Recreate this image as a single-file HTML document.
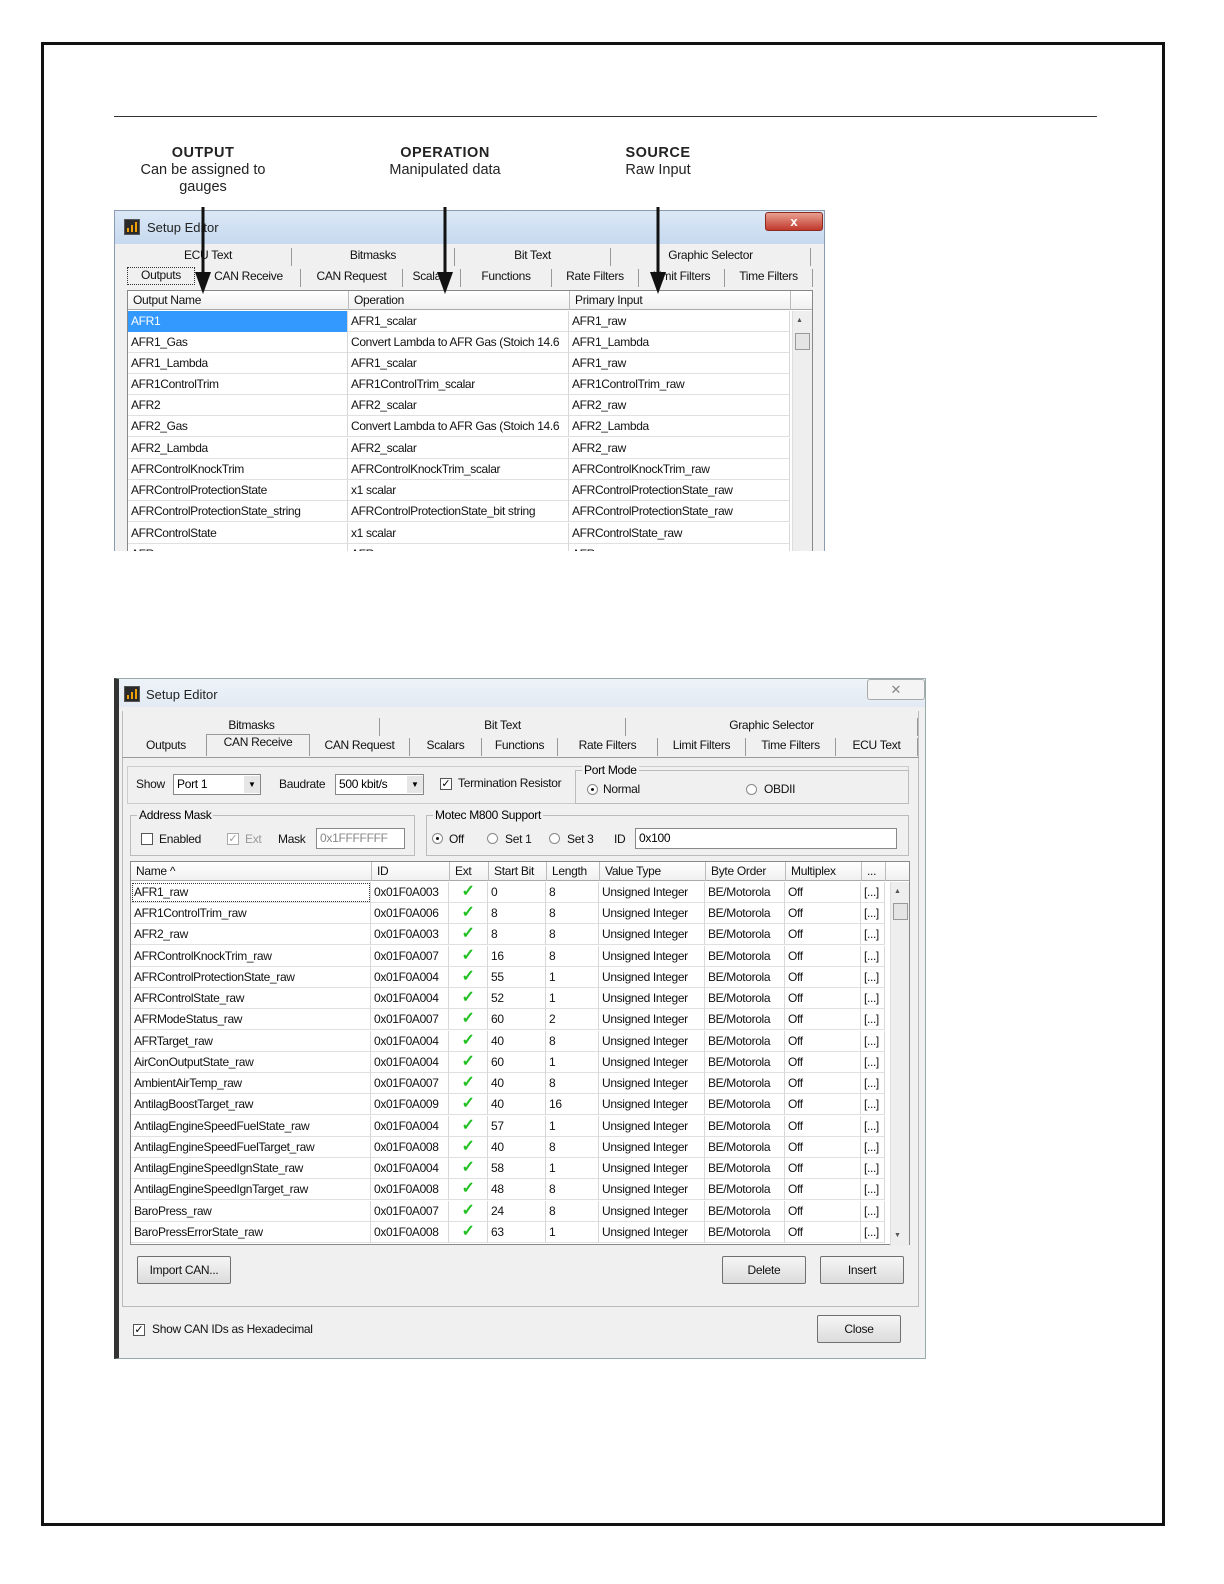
<!DOCTYPE html>
<html><head><meta charset="utf-8"><style>
*{box-sizing:border-box;margin:0;padding:0}
body{width:1224px;height:1584px;background:#fff;position:relative;font-family:"Liberation Sans",sans-serif;overflow:hidden}
.a{position:absolute}
.t{font-size:12px;color:#111;white-space:nowrap;letter-spacing:-0.3px}
.lbl{position:absolute;text-align:center;font-size:14.5px;line-height:17px;color:#222}
.lbl b{letter-spacing:.5px}
.win{position:absolute;background:#f0f0f0;border:1px solid #8a9bb0;overflow:hidden}
.title{position:absolute;left:0;right:0;top:0;background:linear-gradient(#dbe8f6,#c6d9ef);font-size:13px;color:#222}
.ico{position:absolute;width:16px;height:16px;background:#2a2a2a;border:1px solid #555}
.ico i{position:absolute;bottom:2px;width:2px;background:#f0a000}
.tab{position:absolute;font-size:12px;text-align:center;letter-spacing:-0.3px;color:#111;border-right:1px solid #999}
.grid{position:absolute;background:#fff;border:1px solid #888}
.row{position:absolute;left:0;height:21px;border-bottom:1px solid #e0e0e0;display:flex}
.row span{display:block;height:21px;line-height:20px;font-size:12px;padding-left:3px;letter-spacing:-0.35px;border-right:1px solid #d8d8d8;white-space:nowrap;overflow:hidden;color:#111}
.hdr{position:absolute;left:0;height:19px;display:flex;background:linear-gradient(#fff,#f0f0f0);border-bottom:1px solid #aaa}
.hdr span{display:block;height:19px;line-height:18px;font-size:12px;padding-left:5px;letter-spacing:-0.3px;border-right:1px solid #bbb;white-space:nowrap;color:#111}
.btn{position:absolute;border:1px solid #707070;border-radius:2px;background:linear-gradient(#f6f6f6,#dcdcdc);font-size:12px;text-align:center;letter-spacing:-0.3px;color:#111}
.chk{position:absolute;width:12px;height:12px;border:1px solid #555;background:#fff;font-size:11px;line-height:10px;text-align:center}
.rad{position:absolute;width:11px;height:11px;border:1px solid #888;border-radius:50%;background:#fff}
.grp{position:absolute;border:1px solid #bbb}
.grp em{position:absolute;top:-8px;left:6px;background:#f0f0f0;font-style:normal;font-size:12px;letter-spacing:-0.3px;padding:0 2px}
.in{position:absolute;background:#fff;border:1px solid #888;font-size:12px;padding-left:3px;letter-spacing:-0.3px;line-height:18px}
.row span.ck{color:#22c022;font-weight:bold;font-size:16px;padding-left:0}
</style></head><body>
<div class="a" style="left:41px;top:42px;width:1124px;height:1484px;border:3px solid #111"></div>
<div class="a" style="left:114px;top:116px;width:983px;height:1px;background:#333"></div>

<div class="lbl" style="left:123px;top:145px;width:160px"><b>OUTPUT</b><br>Can be assigned to<br>gauges</div>
<div class="lbl" style="left:365px;top:145px;width:160px"><b>OPERATION</b><br>Manipulated data</div>
<div class="lbl" style="left:578px;top:145px;width:160px"><b>SOURCE</b><br>Raw Input</div>

<!-- TOP WINDOW -->
<div class="win" style="left:114px;top:210px;width:711px;height:341px;border-bottom:none">
 <div class="title" style="height:33px"><div class="ico" style="left:9px;top:8px"><i style="left:2px;height:4px"></i><i style="left:6px;height:7px"></i><i style="left:10px;height:10px"></i></div><div class="a" style="left:32px;top:9px">Setup Editor</div>
 <div class="a" style="left:650px;top:1px;width:58px;height:19px;background:linear-gradient(#e8a090,#c0392b);border:1px solid #8a2a20;border-radius:3px;color:#fff;text-align:center;font-weight:bold;font-size:13px;line-height:17px">x</div></div>
 <div class="tab" style="left:10px;top:37px;width:167px;height:18px">ECU Text</div>
 <div class="tab" style="left:177px;top:37px;width:163px;height:18px">Bitmasks</div>
 <div class="tab" style="left:340px;top:37px;width:156px;height:18px">Bit Text</div>
 <div class="tab" style="left:496px;top:37px;width:200px;height:18px">Graphic Selector</div>
 <div class="tab" style="left:12px;top:56px;width:68px;height:18px;border:1px dotted #333">Outputs</div>
 <div class="tab" style="left:82px;top:58px;width:104px;height:18px">CAN Receive</div>
 <div class="tab" style="left:186px;top:58px;width:102px;height:18px">CAN Request</div>
 <div class="tab" style="left:288px;top:58px;width:58px;height:18px">Scalars</div>
 <div class="tab" style="left:346px;top:58px;width:91px;height:18px">Functions</div>
 <div class="tab" style="left:437px;top:58px;width:87px;height:18px">Rate Filters</div>
 <div class="tab" style="left:524px;top:58px;width:86px;height:18px">Limit Filters</div>
 <div class="tab" style="left:610px;top:58px;width:88px;height:18px">Time Filters</div>
 <div class="grid" style="left:12px;top:79px;width:686px;height:270px">
  <div class="hdr" style="top:0;width:684px"><span style="width:221px">Output Name</span><span style="width:221px">Operation</span><span style="width:221px">Primary Input</span></div>
  <div class="a" style="right:0;top:20px;width:20px;height:260px;background:#eee;border-left:1px solid #ddd"><div class="a" style="left:3px;top:6px;font-size:7px;color:#555">▲</div><div class="a" style="left:2px;top:22px;width:15px;height:17px;border:1px solid #999;background:#e4e4e4"></div></div>
  <div class="row" style="top:20px"><span style="width:220px;background:#3399ff;color:#fff">AFR1</span><span style="width:221px">AFR1_scalar</span><span style="width:221px">AFR1_raw</span></div>
  <div class="row" style="top:41px"><span style="width:220px">AFR1_Gas</span><span style="width:221px">Convert Lambda to AFR Gas (Stoich 14.6</span><span style="width:221px">AFR1_Lambda</span></div>
  <div class="row" style="top:62px"><span style="width:220px">AFR1_Lambda</span><span style="width:221px">AFR1_scalar</span><span style="width:221px">AFR1_raw</span></div>
  <div class="row" style="top:83px"><span style="width:220px">AFR1ControlTrim</span><span style="width:221px">AFR1ControlTrim_scalar</span><span style="width:221px">AFR1ControlTrim_raw</span></div>
  <div class="row" style="top:104px"><span style="width:220px">AFR2</span><span style="width:221px">AFR2_scalar</span><span style="width:221px">AFR2_raw</span></div>
  <div class="row" style="top:125px"><span style="width:220px">AFR2_Gas</span><span style="width:221px">Convert Lambda to AFR Gas (Stoich 14.6</span><span style="width:221px">AFR2_Lambda</span></div>
  <div class="row" style="top:147px"><span style="width:220px">AFR2_Lambda</span><span style="width:221px">AFR2_scalar</span><span style="width:221px">AFR2_raw</span></div>
  <div class="row" style="top:168px"><span style="width:220px">AFRControlKnockTrim</span><span style="width:221px">AFRControlKnockTrim_scalar</span><span style="width:221px">AFRControlKnockTrim_raw</span></div>
  <div class="row" style="top:189px"><span style="width:220px">AFRControlProtectionState</span><span style="width:221px">x1 scalar</span><span style="width:221px">AFRControlProtectionState_raw</span></div>
  <div class="row" style="top:210px"><span style="width:220px">AFRControlProtectionState_string</span><span style="width:221px">AFRControlProtectionState_bit string</span><span style="width:221px">AFRControlProtectionState_raw</span></div>
  <div class="row" style="top:232px"><span style="width:220px">AFRControlState</span><span style="width:221px">x1 scalar</span><span style="width:221px">AFRControlState_raw</span></div>
  <div class="row" style="top:253px"><span style="width:220px">AFR...</span><span style="width:221px">AFR...</span><span style="width:221px">AFR...</span></div>
 </div>
</div>

<!-- arrows -->
<svg class="a" style="left:0;top:0" width="1224" height="320">
<g fill="#111" stroke="#111" stroke-width="3">
<line x1="203" y1="207" x2="203" y2="280"/><line x1="445" y1="207" x2="445" y2="280"/><line x1="658" y1="207" x2="658" y2="280"/>
</g>
<g fill="#111"><polygon points="195,272 211,272 203,294"/><polygon points="437,272 453,272 445,294"/><polygon points="650,272 666,272 658,294"/></g>
</svg>

<!-- BOTTOM WINDOW -->
<div class="win" style="left:114px;top:678px;width:812px;height:681px;border-color:#9aa;border-left:5px solid #333">
 <div class="title" style="height:28px;background:linear-gradient(#eef3f8,#e2eaf3)"><div class="ico" style="left:5px;top:7px"><i style="left:2px;height:4px"></i><i style="left:6px;height:7px"></i><i style="left:10px;height:10px"></i></div><div class="a" style="left:27px;top:8px">Setup Editor</div>
 <div class="a" style="left:748px;top:0;width:58px;height:21px;border:1px solid #aaa;border-radius:3px;background:#f4f4f4;color:#888;text-align:center;font-size:13px;line-height:19px">✕</div></div>
 <div class="a" style="left:3px;top:32px;width:797px;height:596px;border:1px solid #bbb;border-top:none"></div>
 <div class="tab" style="left:5px;top:39px;width:256px;height:18px">Bitmasks</div>
 <div class="tab" style="left:261px;top:39px;width:246px;height:18px">Bit Text</div>
 <div class="tab" style="left:507px;top:39px;width:292px;height:18px">Graphic Selector</div>
 <div class="tab" style="left:7px;top:59px;width:80px;height:18px;border:none">Outputs</div>
 <div class="tab" style="left:87px;top:55px;width:104px;height:22px;background:#f0f0f0;border:1px solid #999;border-bottom:none">CAN Receive</div>
 <div class="tab" style="left:191px;top:59px;width:100px;height:18px">CAN Request</div>
 <div class="tab" style="left:291px;top:59px;width:72px;height:18px">Scalars</div>
 <div class="tab" style="left:363px;top:59px;width:76px;height:18px">Functions</div>
 <div class="tab" style="left:439px;top:59px;width:100px;height:18px">Rate Filters</div>
 <div class="tab" style="left:539px;top:59px;width:88px;height:18px">Limit Filters</div>
 <div class="tab" style="left:627px;top:59px;width:90px;height:18px">Time Filters</div>
 <div class="tab" style="left:717px;top:59px;width:82px;height:18px">ECU Text</div>
 <div class="a" style="left:3px;top:78px;width:797px;height:1px;background:#999"></div>
 <div class="grp" style="left:8px;top:87px;width:782px;height:38px;border-color:#ccc"></div>
 <div class="a t" style="left:17px;top:98px">Show</div>
 <div class="in" style="left:54px;top:95px;width:88px;height:21px">Port 1</div><div class="a" style="left:125px;top:97px;width:16px;height:17px;background:#e6e6e6;font-size:8px;text-align:center;line-height:17px">▼</div>
 <div class="a t" style="left:160px;top:98px">Baudrate</div>
 <div class="in" style="left:216px;top:95px;width:89px;height:21px">500 kbit/s</div><div class="a" style="left:288px;top:97px;width:16px;height:17px;background:#e6e6e6;font-size:8px;text-align:center;line-height:17px">▼</div>
 <div class="chk" style="left:321px;top:99px">✓</div><div class="a t" style="left:339px;top:97px">Termination Resistor</div>
 <div class="grp" style="left:456px;top:91px;width:334px;height:34px"><em>Port Mode</em></div>
 <div class="rad" style="left:468px;top:105px"><div class="a" style="left:3px;top:3px;width:3px;height:3px;background:#111;border-radius:50%"></div></div><div class="a t" style="left:484px;top:103px">Normal</div>
 <div class="rad" style="left:627px;top:105px"></div><div class="a t" style="left:645px;top:103px">OBDII</div>
 <div class="grp" style="left:11px;top:136px;width:285px;height:41px"><em>Address Mask</em></div>
 <div class="chk" style="left:22px;top:154px"></div><div class="a t" style="left:40px;top:153px">Enabled</div>
 <div class="chk" style="left:108px;top:154px;border-color:#aaa;color:#999">✓</div><div class="a t" style="left:126px;top:153px;color:#999">Ext</div>
 <div class="a t" style="left:159px;top:153px">Mask</div>
 <div class="in" style="left:197px;top:149px;width:89px;height:21px;color:#888">0x1FFFFFFF</div>
 <div class="grp" style="left:307px;top:136px;width:483px;height:41px"><em>Motec M800 Support</em></div>
 <div class="rad" style="left:313px;top:154px"><div class="a" style="left:3px;top:3px;width:3px;height:3px;background:#111;border-radius:50%"></div></div><div class="a t" style="left:330px;top:153px">Off</div>
 <div class="rad" style="left:368px;top:154px"></div><div class="a t" style="left:386px;top:153px">Set 1</div>
 <div class="rad" style="left:430px;top:154px"></div><div class="a t" style="left:448px;top:153px">Set 3</div>
 <div class="a t" style="left:495px;top:153px">ID</div>
 <div class="in" style="left:516px;top:149px;width:262px;height:21px">0x100</div>

 <div class="grid" style="left:11px;top:182px;width:780px;height:384px">
  <div class="hdr" style="top:0;width:778px"><span style="width:241px">Name ^</span><span style="width:78px">ID</span><span style="width:39px">Ext</span><span style="width:58px">Start Bit</span><span style="width:53px">Length</span><span style="width:106px">Value Type</span><span style="width:80px">Byte Order</span><span style="width:76px">Multiplex</span><span style="width:24px">...</span></div>
  <div class="a" style="right:0;top:20px;width:19px;height:364px;background:#eee;border-left:1px solid #ddd"><div class="a" style="left:3px;top:6px;font-size:7px;color:#555">▲</div><div class="a" style="left:2px;top:21px;width:15px;height:17px;border:1px solid #999;background:#e4e4e4"></div><div class="a" style="left:3px;top:350px;font-size:7px;color:#555">▼</div></div>
  <div class="row" style="top:20px"><span style="width:240px;outline:1px dotted #333;outline-offset:-2px">AFR1_raw</span><span style="width:78px">0x01F0A003</span><span style="width:39px;text-align:center" class="ck">✓</span><span style="width:58px">0</span><span style="width:53px">8</span><span style="width:106px">Unsigned Integer</span><span style="width:80px">BE/Motorola</span><span style="width:76px">Off</span><span style="width:24px">[...]</span></div>
  <div class="row" style="top:41px"><span style="width:240px">AFR1ControlTrim_raw</span><span style="width:78px">0x01F0A006</span><span style="width:39px;text-align:center" class="ck">✓</span><span style="width:58px">8</span><span style="width:53px">8</span><span style="width:106px">Unsigned Integer</span><span style="width:80px">BE/Motorola</span><span style="width:76px">Off</span><span style="width:24px">[...]</span></div>
  <div class="row" style="top:62px"><span style="width:240px">AFR2_raw</span><span style="width:78px">0x01F0A003</span><span style="width:39px;text-align:center" class="ck">✓</span><span style="width:58px">8</span><span style="width:53px">8</span><span style="width:106px">Unsigned Integer</span><span style="width:80px">BE/Motorola</span><span style="width:76px">Off</span><span style="width:24px">[...]</span></div>
  <div class="row" style="top:84px"><span style="width:240px">AFRControlKnockTrim_raw</span><span style="width:78px">0x01F0A007</span><span style="width:39px;text-align:center" class="ck">✓</span><span style="width:58px">16</span><span style="width:53px">8</span><span style="width:106px">Unsigned Integer</span><span style="width:80px">BE/Motorola</span><span style="width:76px">Off</span><span style="width:24px">[...]</span></div>
  <div class="row" style="top:105px"><span style="width:240px">AFRControlProtectionState_raw</span><span style="width:78px">0x01F0A004</span><span style="width:39px;text-align:center" class="ck">✓</span><span style="width:58px">55</span><span style="width:53px">1</span><span style="width:106px">Unsigned Integer</span><span style="width:80px">BE/Motorola</span><span style="width:76px">Off</span><span style="width:24px">[...]</span></div>
  <div class="row" style="top:126px"><span style="width:240px">AFRControlState_raw</span><span style="width:78px">0x01F0A004</span><span style="width:39px;text-align:center" class="ck">✓</span><span style="width:58px">52</span><span style="width:53px">1</span><span style="width:106px">Unsigned Integer</span><span style="width:80px">BE/Motorola</span><span style="width:76px">Off</span><span style="width:24px">[...]</span></div>
  <div class="row" style="top:147px"><span style="width:240px">AFRModeStatus_raw</span><span style="width:78px">0x01F0A007</span><span style="width:39px;text-align:center" class="ck">✓</span><span style="width:58px">60</span><span style="width:53px">2</span><span style="width:106px">Unsigned Integer</span><span style="width:80px">BE/Motorola</span><span style="width:76px">Off</span><span style="width:24px">[...]</span></div>
  <div class="row" style="top:169px"><span style="width:240px">AFRTarget_raw</span><span style="width:78px">0x01F0A004</span><span style="width:39px;text-align:center" class="ck">✓</span><span style="width:58px">40</span><span style="width:53px">8</span><span style="width:106px">Unsigned Integer</span><span style="width:80px">BE/Motorola</span><span style="width:76px">Off</span><span style="width:24px">[...]</span></div>
  <div class="row" style="top:190px"><span style="width:240px">AirConOutputState_raw</span><span style="width:78px">0x01F0A004</span><span style="width:39px;text-align:center" class="ck">✓</span><span style="width:58px">60</span><span style="width:53px">1</span><span style="width:106px">Unsigned Integer</span><span style="width:80px">BE/Motorola</span><span style="width:76px">Off</span><span style="width:24px">[...]</span></div>
  <div class="row" style="top:211px"><span style="width:240px">AmbientAirTemp_raw</span><span style="width:78px">0x01F0A007</span><span style="width:39px;text-align:center" class="ck">✓</span><span style="width:58px">40</span><span style="width:53px">8</span><span style="width:106px">Unsigned Integer</span><span style="width:80px">BE/Motorola</span><span style="width:76px">Off</span><span style="width:24px">[...]</span></div>
  <div class="row" style="top:232px"><span style="width:240px">AntilagBoostTarget_raw</span><span style="width:78px">0x01F0A009</span><span style="width:39px;text-align:center" class="ck">✓</span><span style="width:58px">40</span><span style="width:53px">16</span><span style="width:106px">Unsigned Integer</span><span style="width:80px">BE/Motorola</span><span style="width:76px">Off</span><span style="width:24px">[...]</span></div>
  <div class="row" style="top:254px"><span style="width:240px">AntilagEngineSpeedFuelState_raw</span><span style="width:78px">0x01F0A004</span><span style="width:39px;text-align:center" class="ck">✓</span><span style="width:58px">57</span><span style="width:53px">1</span><span style="width:106px">Unsigned Integer</span><span style="width:80px">BE/Motorola</span><span style="width:76px">Off</span><span style="width:24px">[...]</span></div>
  <div class="row" style="top:275px"><span style="width:240px">AntilagEngineSpeedFuelTarget_raw</span><span style="width:78px">0x01F0A008</span><span style="width:39px;text-align:center" class="ck">✓</span><span style="width:58px">40</span><span style="width:53px">8</span><span style="width:106px">Unsigned Integer</span><span style="width:80px">BE/Motorola</span><span style="width:76px">Off</span><span style="width:24px">[...]</span></div>
  <div class="row" style="top:296px"><span style="width:240px">AntilagEngineSpeedIgnState_raw</span><span style="width:78px">0x01F0A004</span><span style="width:39px;text-align:center" class="ck">✓</span><span style="width:58px">58</span><span style="width:53px">1</span><span style="width:106px">Unsigned Integer</span><span style="width:80px">BE/Motorola</span><span style="width:76px">Off</span><span style="width:24px">[...]</span></div>
  <div class="row" style="top:317px"><span style="width:240px">AntilagEngineSpeedIgnTarget_raw</span><span style="width:78px">0x01F0A008</span><span style="width:39px;text-align:center" class="ck">✓</span><span style="width:58px">48</span><span style="width:53px">8</span><span style="width:106px">Unsigned Integer</span><span style="width:80px">BE/Motorola</span><span style="width:76px">Off</span><span style="width:24px">[...]</span></div>
  <div class="row" style="top:339px"><span style="width:240px">BaroPress_raw</span><span style="width:78px">0x01F0A007</span><span style="width:39px;text-align:center" class="ck">✓</span><span style="width:58px">24</span><span style="width:53px">8</span><span style="width:106px">Unsigned Integer</span><span style="width:80px">BE/Motorola</span><span style="width:76px">Off</span><span style="width:24px">[...]</span></div>
  <div class="row" style="top:360px"><span style="width:240px">BaroPressErrorState_raw</span><span style="width:78px">0x01F0A008</span><span style="width:39px;text-align:center" class="ck">✓</span><span style="width:58px">63</span><span style="width:53px">1</span><span style="width:106px">Unsigned Integer</span><span style="width:80px">BE/Motorola</span><span style="width:76px">Off</span><span style="width:24px">[...]</span></div>
 </div>
 <div class="btn" style="left:18px;top:577px;width:94px;height:28px;line-height:26px">Import CAN...</div>
 <div class="btn" style="left:603px;top:577px;width:84px;height:28px;line-height:26px">Delete</div>
 <div class="btn" style="left:701px;top:577px;width:84px;height:28px;line-height:26px">Insert</div>
 <div class="chk" style="left:14px;top:645px">✓</div><div class="a t" style="left:33px;top:643px">Show CAN IDs as Hexadecimal</div>
 <div class="btn" style="left:698px;top:636px;width:84px;height:28px;line-height:26px">Close</div>
</div>
</body></html>
